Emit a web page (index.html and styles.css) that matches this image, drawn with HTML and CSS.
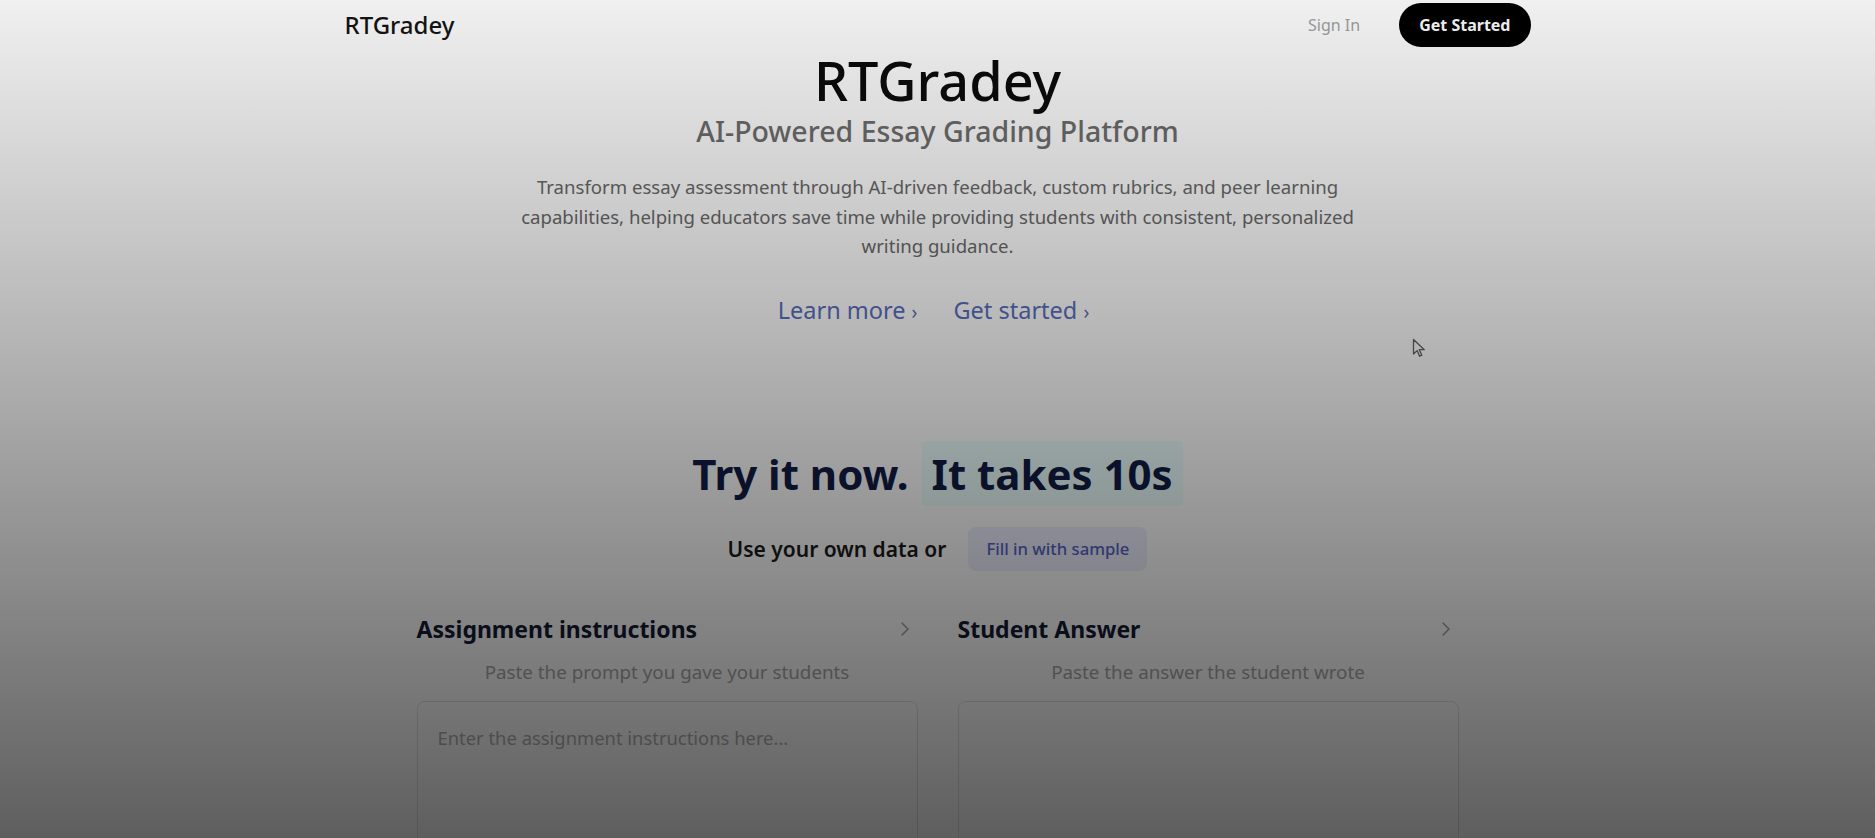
FILE: index.html
```html
<!DOCTYPE html>
<html lang="en">
<head>
<meta charset="utf-8">
<title>RTGradey</title>
<link rel="stylesheet" href="styles.css">
</head>
<body>
<div class="page">
  <header class="nav">
    <a class="logo" href="#">RTGradey</a>
    <div class="nav-actions">
      <a class="signin" href="#">Sign In</a>
      <a class="btn-dark" href="#">Get Started</a>
    </div>
  </header>

  <section class="hero">
    <h1 class="hero-title">RTGradey</h1>
    <h2 class="hero-sub">AI-Powered Essay Grading Platform</h2>
    <p class="lead">Transform essay assessment through AI-driven feedback, custom rubrics, and peer learning capabilities, helping educators save time while providing students with consistent, personalized writing guidance.</p>
    <div class="links">
      <a class="link" href="#">Learn more <span class="chev">›</span></a>
      <a class="link" href="#">Get started <span class="chev">›</span></a>
    </div>
  </section>

  <section class="try">
    <h3 class="try-title">Try it now. <span class="hl">It takes 10s</span></h3>
    <div class="sample-row">
      <span class="sample-label">Use your own data or</span>
      <button class="sample-btn" type="button">Fill in with sample</button>
    </div>
    <div class="grid">
      <div class="col">
        <div class="col-head">
          <span class="col-title">Assignment instructions</span>
          <svg class="col-chev" width="10" height="16" viewBox="0 0 10 16"><path d="M2 2l6 6-6 6" fill="none" stroke="#9ca3af" stroke-width="1.6" stroke-linecap="round" stroke-linejoin="round"/></svg>
        </div>
        <p class="col-sub">Paste the prompt you gave your students</p>
        <textarea class="field" placeholder="Enter the assignment instructions here..."></textarea>
      </div>
      <div class="col">
        <div class="col-head">
          <span class="col-title">Student Answer</span>
          <svg class="col-chev" width="10" height="16" viewBox="0 0 10 16"><path d="M2 2l6 6-6 6" fill="none" stroke="#9ca3af" stroke-width="1.6" stroke-linecap="round" stroke-linejoin="round"/></svg>
        </div>
        <p class="col-sub">Paste the answer the student wrote</p>
        <textarea class="field"></textarea>
      </div>
    </div>
  </section>

  <div class="cursor">
    <svg width="14" height="20" viewBox="0 0 14 20"><path d="M1.5 1.5v14.5l3.6-3.4 2.5 5.6 2.2-1-2.5-5.5h5z" fill="#fff" stroke="#222" stroke-width="1.3" stroke-linejoin="round"/></svg>
  </div>
  <div class="shade"></div>
</div>
</body>
</html>
```

FILE: styles.css
```css
html, body {
  margin: 0;
  padding: 0;
  background: #ffffff;
}

body {
  font-family: "Noto Sans", "Open Sans", "DejaVu Sans", sans-serif;
  color: #111;
}

a {
  text-decoration: none;
  color: inherit;
}

.page {
  position: relative;
  height: 100vh;
  overflow: hidden;
}

/* nav */
.nav {
  width: 1186px;
  margin: 0 auto;
  height: 49px;
  display: flex;
  align-items: center;
  justify-content: space-between;
}

.logo {
  font-size: 24px;
  font-weight: 500;
  color: #141414;
  line-height: 1;
}

.nav-actions {
  display: flex;
  align-items: center;
  gap: 39px;
}

.signin {
  font-size: 16px;
  color: #a2a2a2;
}

.btn-dark {
  background: #000;
  color: #fff;
  font-size: 16px;
  font-weight: 700;
  line-height: 24px;
  padding: 10px 20px;
  border-radius: 999px;
}

/* hero */
.hero {
  text-align: center;
}

.hero-title {
  margin: 0;
  font-size: 54px;
  font-weight: 500;
  line-height: 62px;
  color: #0b0b0b;
}

.hero-sub {
  margin: 0;
  font-size: 28.5px;
  font-weight: 500;
  line-height: 40px;
  color: #6e6e6e;
}

.lead {
  margin: 21px auto 0;
  max-width: 860px;
  font-size: 18.6px;
  line-height: 29.5px;
  color: #6a6a6a;
}

.links {
  margin-top: 34px;
  display: flex;
  justify-content: center;
  gap: 36px;
  padding-right: 8px;
  line-height: 30px;
}

.link {
  font-size: 23.5px;
  color: #5a6fc0;
}

.chev {
  font-size: 19px;
}

/* try section */
.try {
  text-align: center;
}

.try-title {
  margin: 117px 0 0;
  font-size: 42px;
  font-weight: 700;
  line-height: 60px;
  color: #111c44;
}

.hl {
  background: #ecfffd;
  padding: 4px 10px;
  margin-left: 2px;
  border-radius: 4px;
}

.sample-row {
  margin-top: 23px;
  display: flex;
  justify-content: center;
  align-items: center;
  gap: 22px;
  height: 44px;
}

.sample-label {
  font-size: 21px;
  font-weight: 600;
  color: #1a1a1a;
}

.sample-btn {
  font-family: inherit;
  font-size: 16.7px;
  font-weight: 500;
  color: #5862c8;
  background: #eef0ff;
  border: 0;
  border-radius: 8px;
  height: 44px;
  padding: 0 18px;
}

.grid {
  width: 1042px;
  margin: 42px auto 0;
  display: grid;
  grid-template-columns: 1fr 1fr;
  column-gap: 40px;
  text-align: left;
}

.col-head {
  display: flex;
  justify-content: space-between;
  align-items: center;
  height: 32px;
  padding-right: 8px;
}

.col-title {
  font-size: 23px;
  font-weight: 700;
  color: #131a33;
}

.col-sub {
  margin: 14px 0 0;
  text-align: center;
  font-size: 18.8px;
  line-height: 26px;
  color: #a8a8a8;
}

.field {
  display: block;
  width: 100%;
  box-sizing: border-box;
  margin-top: 16px;
  height: 240px;
  border: 1px solid #e2e2e2;
  border-radius: 8px;
  padding: 24px 20px;
  font-family: "Noto Sans", "Open Sans", sans-serif;
  font-size: 18.4px;
  line-height: 24px;
  resize: none;
  background: transparent;
  outline: none;
}

.field::placeholder {
  color: #b0b0b0;
}

/* overlays */
.cursor {
  position: absolute;
  left: 1412px;
  top: 338px;
  opacity: 0.7;
}

.shade {
  position: absolute;
  inset: 0;
  background: linear-gradient(to bottom, rgba(0, 0, 0, 0.06), rgba(0, 0, 0, 0.63));
  pointer-events: none;
}
```
